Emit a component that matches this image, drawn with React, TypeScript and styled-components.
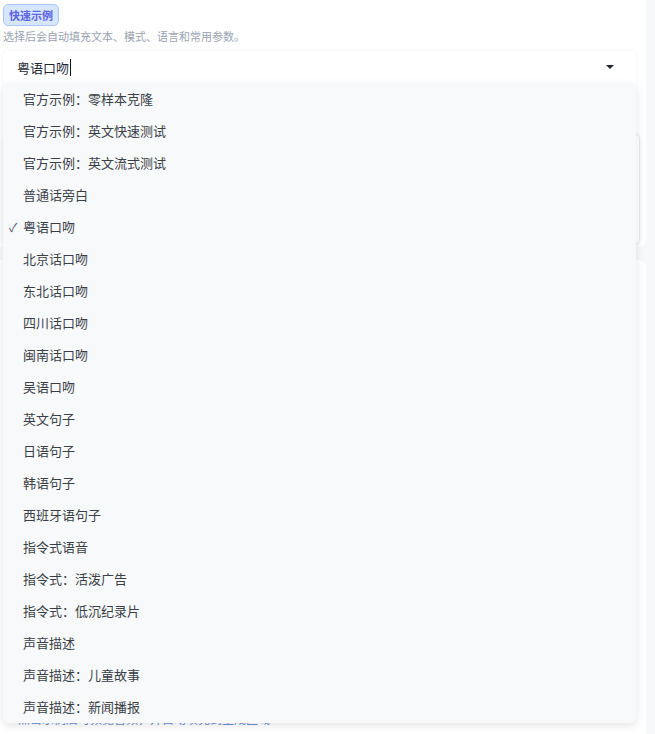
import styled, { createGlobalStyle } from "styled-components";

const GlobalStyle = createGlobalStyle`
    html, body {
        margin: 0;
        padding: 0;
        background: #f7f8fa;
        overflow: hidden;
    }
    body {
        font-family: "Noto Sans CJK SC", "Noto Sans", sans-serif;
        color: #333333;
    }
`;

const Page = styled.div`
    display: flex;
    width: 655px;
    height: 734px;
    overflow: hidden;
`;
const MainCol = styled.div`
    width: 646px;
    display: flex;
    flex-direction: column;
    gap: 13px;
`;
const SideStrip = styled.div`
    flex: 1;
    background: #f7f8fa;
`;
const Card = styled.div`
    background: #ffffff;
    border-radius: 0 0 8px 0;
    padding: 4px 10px 2px 3px;
`;
const LowerCard = styled.div`
    flex: 1;
    background: #ffffff;
    border-radius: 0 8px 0 0;
    padding: 451px 10px 0 18px;
`;
const Badge = styled.div`
    display: flex;
    align-items: center;
    width: fit-content;
    height: 22px;
    box-sizing: border-box;
    padding: 0 5px;
    border: 1px solid #a9c8fb;
    border-radius: 5px;
    background: #d6e6ff;
    color: #5b63e8;
    font-size: 11px;
    font-weight: 700;
`;
const Hint = styled.div`
    margin-top: 3px;
    font-size: 11px;
    line-height: 14px;
    color: #9aa3b2;
`;
const SelectWrap = styled.div`
    position: relative;
    margin-top: 8px;
`;
const SelectBox = styled.div`
    display: flex;
    align-items: center;
    height: 32px;
    padding: 0 22px 0 14px;
    background: #ffffff;
    border-radius: 5px 5px 0 0;
    box-shadow: 0 0 4px rgba(0, 0, 0, 0.06);
    font-size: 13px;
    color: #1f2937;
`;
const Caret = styled.span`
    display: inline-block;
    width: 1px;
    height: 17px;
    margin-left: 1px;
    background: #111111;
`;
const Arrow = styled.span`
    margin-left: auto;
    width: 0;
    height: 0;
    border-left: 4px solid transparent;
    border-right: 4px solid transparent;
    border-top: 4px solid #1e2533;
`;
const Dropdown = styled.ul`
    position: absolute;
    top: 100%;
    left: 0;
    right: 0;
    z-index: 10;
    margin: 0;
    padding: 0;
    list-style: none;
    background: #f8f9fb;
    border-radius: 0 0 6px 6px;
    box-shadow: 0 3px 8px rgba(0, 0, 0, 0.1);
`;
const Option = styled.li`
    display: flex;
    align-items: center;
    height: 32px;
    padding: 0 0 2px 6px;
    box-sizing: border-box;
    font-size: 13px;
    color: #3a3f47;
`;
const Check = styled.span`
    width: 14px;
    font-size: 12px;
    color: #555b66;
`;
const Editor = styled.div`
    margin-top: 50px;
    margin-right: -4px;
    height: 110px;
    border: 1px solid #e5e7eb;
    border-radius: 6px;
    box-shadow: 0 1px 4px rgba(0, 0, 0, 0.08);
`;
const LinkText = styled.div`
    font-size: 12px;
    line-height: 16px;
    color: #6b8fd6;
`;

const options = [
    "官方示例：零样本克隆",
    "官方示例：英文快速测试",
    "官方示例：英文流式测试",
    "普通话旁白",
    "粤语口吻",
    "北京话口吻",
    "东北话口吻",
    "四川话口吻",
    "闽南话口吻",
    "吴语口吻",
    "英文句子",
    "日语句子",
    "韩语句子",
    "西班牙语句子",
    "指令式语音",
    "指令式：活泼广告",
    "指令式：低沉纪录片",
    "声音描述",
    "声音描述：儿童故事",
    "声音描述：新闻播报",
];

function App() {
    const selected = "粤语口吻";

    return (
        <Page>
            <GlobalStyle />
            <MainCol>
                <Card>
                    <Badge>快速示例</Badge>
                    <Hint>选择后会自动填充文本、模式、语言和常用参数。</Hint>
                    <SelectWrap>
                        <SelectBox>
                            {selected}
                            <Caret />
                            <Arrow />
                        </SelectBox>
                        <Dropdown>
                            {options.map((o) => (
                                <Option key={o}>
                                    <Check>{o === selected ? "✓" : ""}</Check>
                                    {o}
                                </Option>
                            ))}
                        </Dropdown>
                    </SelectWrap>
                    <Editor />
                </Card>
                <LowerCard>
                    <LinkText>点击示例后可预览音频，并自动填充到生成区域</LinkText>
                </LowerCard>
            </MainCol>
            <SideStrip />
        </Page>
    );
}

export default App;
